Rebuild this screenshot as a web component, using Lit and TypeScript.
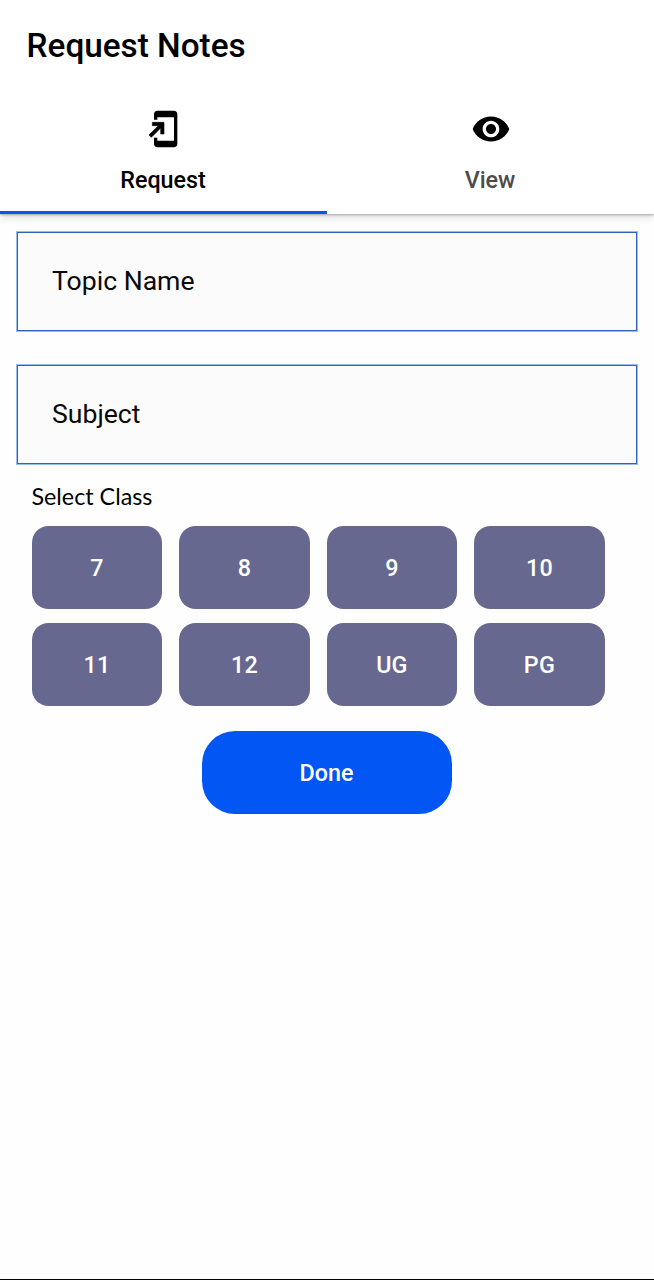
import { LitElement, html, css } from "lit";
import { customElement, property, state } from "lit/decorators.js";
import { classMap } from "lit/directives/class-map.js";

@customElement("class-chip")
class ClassChip extends LitElement {
  @property() label = "";

  static styles = css`
    :host { display: block; }
    .chip {
      display: block;
      width: 100%;
      height: 83px;
      padding: 2px 0 0;
      border: 0;
      border-radius: 16.6px;
      background: #67688f;
      color: #fff;
      font: 500 23.3px/81px Roboto, sans-serif;
      letter-spacing: 0.2px;
      text-align: center;
    }
  `;

  render() {
    return html`<button class="chip">${this.label}</button>`;
  }
}

@customElement("app-root")
class AppRoot extends LitElement {
  @state() tab = 0;

  static styles = css`
    :host {
      display: flex;
      flex-direction: column;
      box-sizing: border-box;
      width: 100%;
      height: 1280px;
      background: #fefefe;
      border-bottom: 1px solid #000;
      font-family: Roboto, sans-serif;
      color: #000;
    }
    .header {
      flex: none;
      height: 214px;
      background: #fff;
      box-shadow: 0 1px 2px rgba(0, 0, 0, 0.26), 0 3px 8px rgba(0, 0, 0, 0.15);
    }
    .title {
      margin: 0;
      height: 93px;
      padding-left: 26.6px;
      font-size: 33.3px;
      font-weight: 500;
      line-height: 92px;
    }
    .tabs { display: grid; grid-template-columns: 1fr 1fr; height: 121px; }
    .tab {
      display: flex;
      flex-direction: column;
      align-items: center;
      box-sizing: border-box;
      padding: 16px 1px 0 0;
      border-bottom: 3px solid transparent;
      color: #4c4c4c;
      font-size: 23.3px;
      font-weight: 500;
      line-height: 28px;
    }
    .tab.active { color: #000; border-bottom-color: #0656e8; }
    .icon { width: 40px; height: 40px; margin: 0 0 17px 1px; fill: #000; }
    .arrow { stroke: #000; stroke-width: 0.35; }
    .fields { display: grid; gap: 34px; padding: 18px 17px 0; }
    .field {
      box-sizing: border-box;
      height: 99px;
      width: 100%;
      border: 1px solid #2f63be;
      border-radius: 0;
      box-shadow: 0 0 0 1px rgba(50, 120, 225, 0.5);
      background: #fbfbfb;
      padding: 0 34px 2px;
      font: 400 26.6px/95px Roboto, sans-serif;
      color: #000;
      outline: 0;
    }
    .field::placeholder { color: #0a0a0a; opacity: 1; }
    .caption {
      padding: 17px 0 0 31.5px;
      font: 400 23.3px/30px Lato, sans-serif;
      color: #000;
    }
    .chips {
      display: grid;
      grid-template-columns: repeat(4, 130.7px);
      column-gap: 16.8px;
      row-gap: 14px;
      padding: 15px 0 0 31.6px;
    }
    .done {
      align-self: center;
      flex: none;
      width: 250px;
      height: 83px;
      margin-top: 25px;
      padding: 2px 1px 0 0;
      border: 0;
      border-radius: 33px;
      background: #0256f3;
      color: #fff;
      font: 500 23.3px/81px Roboto, sans-serif;
    }
  `;

  render() {
    const tabs = [
      ["Request", "M18 1.01L8 1c-1.1 0-2 .9-2 2v3.5h2V5h10v14H8v-1.7H6V21c0 1.1.9 2 2 2h10c1.1 0 2-.9 2-2V3c0-1.1-.9-1.99-2-1.99z", "M10 15h2V8H5v2h3.59L3 15.59 4.41 17 10 11.41V15z"],
      ["View", "M12 4.5C7 4.5 2.73 7.61 1 12c1.73 4.39 6 7.5 11 7.5s9.27-3.11 11-7.5c-1.73-4.39-6-7.5-11-7.5zM12 17c-2.76 0-5-2.24-5-5s2.24-5 5-5 5 2.24 5 5-2.24 5-5 5zm0-8c-1.66 0-3 1.34-3 3s1.34 3 3 3 3-1.34 3-3-1.34-3-3-3z", ""],
    ];
    return html`
      <header class="header">
        <h1 class="title">Request Notes</h1>
        <nav class="tabs">
          ${tabs.map(([label, shape, arrow], i) => html`
            <div class=${classMap({ tab: true, active: this.tab === i })} @click=${() => (this.tab = i)}>
              <svg class="icon" viewBox="0 0 24 24"><path d=${shape}></path><path class="arrow" d=${arrow}></path></svg>
              <span>${label}</span>
            </div>`)}
        </nav>
      </header>
      <div class="fields">
        <input class="field" placeholder="Topic Name" />
        <input class="field" placeholder="Subject" />
      </div>
      <div class="caption">Select Class</div>
      <div class="chips">
        ${["7", "8", "9", "10", "11", "12", "UG", "PG"].map((c) => html`<class-chip label=${c}></class-chip>`)}
      </div>
      <button class="done">Done</button>
    `;
  }
}
